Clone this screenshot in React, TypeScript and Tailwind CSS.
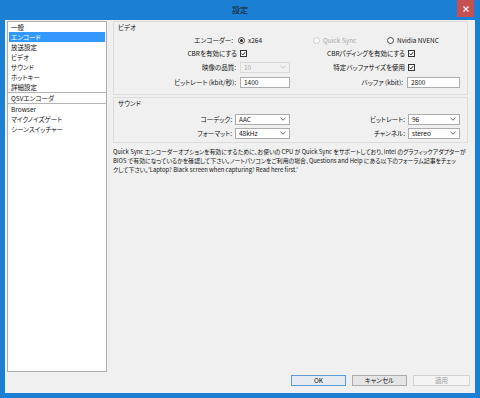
import React from 'react';

const jp = "font-['Noto_Sans_CJK_JP','Noto_Sans',sans-serif] [font-feature-settings:'palt']";

const navItems = [
  'エンコード',
];

function Chevron({ disabled }: { disabled?: boolean }) {
  return (
    <svg width="6" height="4" viewBox="0 0 6 4" className="shrink-0">
      <path d="M0.5 0.8 L3 3.2 L5.5 0.8" fill="none" stroke={disabled ? '#c4c4c4' : '#555'} strokeWidth="0.9" />
    </svg>
  );
}

function Select({ value, w, disabled }: { value: string; w: string; disabled?: boolean }) {
  return (
    <div
      className={`${w} h-[11px] border flex items-center justify-between pl-[3px] pr-[3px] ${
        disabled ? 'bg-[#f0f0f0] border-[#d9d9d9] text-[#a8a8a8]' : 'bg-white border-[#acacac] text-[#111]'
      }`}
    >
      <span>{value}</span>
      <Chevron disabled={disabled} />
    </div>
  );
}

function Input({ value, w }: { value: string; w: string }) {
  return (
    <div className={`${w} h-[11px] border border-[#abadb3] bg-white flex items-center pl-[3px] text-[#111]`}>
      {value}
    </div>
  );
}

function Check() {
  return (
    <span className="w-[7px] h-[7px] border border-[#333] bg-white flex items-center justify-center">
      <svg width="5" height="5" viewBox="0 0 5 5">
        <path d="M0.6 2.6 L1.9 3.9 L4.4 0.9" fill="none" stroke="#111" strokeWidth="0.9" />
      </svg>
    </span>
  );
}

function Radio({ label, checked, disabled }: { label: string; checked?: boolean; disabled?: boolean }) {
  return (
    <span className="flex items-center gap-[3px]">
      <span
        className={`w-[7px] h-[7px] rounded-full border bg-white flex items-center justify-center ${
          disabled ? 'border-[#cccccc] bg-[#f4f4f4]' : 'border-[#444]'
        }`}
      >
        {checked && <span className="w-[3px] h-[3px] rounded-full bg-[#222]" />}
      </span>
      <span className={disabled ? 'text-[#a6a6a6]' : 'text-[#111]'}>{label}</span>
    </span>
  );
}

function Button({ label, w, primary, disabled }: { label: string; w: string; primary?: boolean; disabled?: boolean }) {
  return (
    <div
      className={`${w} h-[11px] border flex items-center justify-center ${
        disabled
          ? 'border-[#d2d2d2] bg-[#f4f4f4] text-[#a0a0a0]'
          : primary
          ? 'border-[#5b9bd6] bg-[#e5ebf1] text-[#111]'
          : 'border-[#acacac] bg-[#e5e5e5] text-[#111]'
      }`}
    >
      {label}
    </div>
  );
}

function SideList() {
  const top = ['一般', 'エンコード', '放送設定', 'ビデオ', 'サウンド', 'ホットキー', '詳細設定'];
  const bottom = ['Browser', 'マイクノイズゲート', 'シーンスイッチャー'];
  return (
    <div className="w-[100px] h-[351px] border border-[#adadad] bg-white px-[1px]">
      {top.map((t) => (
        <div
          key={t}
          className={`h-[10px] flex items-center pl-[2px] ${
            t === navItems[0] ? 'bg-[#3399ff] text-white' : 'text-[#111]'
          }`}
        >
          {t}
        </div>
      ))}
      <div className="h-px bg-[#b4b4b4] -mx-[1px]" />
      <div className="h-[10px] flex items-center pl-[2px] text-[#111]">QSVエンコーダ</div>
      <div className="h-px bg-[#b4b4b4] -mx-[1px]" />
      {bottom.map((t) => (
        <div key={t} className="h-[10px] flex items-center pl-[2px] text-[#111]">
          {t}
        </div>
      ))}
    </div>
  );
}

function VideoGroup() {
  return (
    <div className="h-[74px] border border-[#dcdcdc] flex flex-col">
      <div className="h-[10px] flex items-center pl-[4px] text-[#111]">ビデオ</div>
      <div className="mt-[2px] h-[12px] flex items-center">
        <div className="w-[124px] text-right pr-[5px]">エンコーダー:</div>
        <div className="w-[75px]">
          <Radio label="x264" checked />
        </div>
        <div className="w-[74px]">
          <Radio label="Quick Sync" disabled />
        </div>
        <Radio label="Nvidia NVENC" />
      </div>
      <div className="h-[14px] flex items-center">
        <div className="w-[126px] text-right pr-[3px]">CBRを有効にする</div>
        <div className="w-[50px]">
          <Check />
        </div>
        <div className="w-[118px] text-right pr-[3px]">CBRパディングを有効にする</div>
        <Check />
      </div>
      <div className="h-[14px] flex items-center">
        <div className="w-[126px] text-right pr-[4px]">映像の品質:</div>
        <Select value="10" w="w-[50px]" disabled />
        <div className="w-[118px] text-right pr-[3px]">特定バッファサイズを使用</div>
        <Check />
      </div>
      <div className="mt-[2px] h-[13px] flex items-center">
        <div className="w-[126px] text-right pr-[4px]">ビットレート (kbit/秒):</div>
        <Input value="1400" w="w-[50px]" />
        <div className="w-[117px] text-right pr-[4px]">バッファ (kbit):</div>
        <Input value="2800" w="w-[53px]" />
      </div>
    </div>
  );
}

function SoundGroup() {
  return (
    <div className="mt-[2px] h-[46px] border border-[#dcdcdc] flex flex-col">
      <div className="h-[10px] flex items-center pl-[4px] text-[#111]">サウンド</div>
      <div className="mt-[4px] h-[14px] flex items-center">
        <div className="w-[121px] text-right pr-[3px]">コーデック:</div>
        <Select value="AAC" w="w-[55px]" />
        <div className="w-[118px] text-right pr-[3px]">ビットレート:</div>
        <Select value="96" w="w-[52px]" />
      </div>
      <div className="h-[14px] flex items-center">
        <div className="w-[121px] text-right pr-[3px]">フォーマット:</div>
        <Select value="48kHz" w="w-[55px]" />
        <div className="w-[118px] text-right pr-[3px]">チャンネル:</div>
        <Select value="stereo" w="w-[52px]" />
      </div>
    </div>
  );
}

export default function App() {
  return (
    <div className={`w-[480px] h-[398px] bg-[#1b7fd3] flex flex-col text-[6.5px] leading-none text-[#111] ${jp}`}>
      <div className="h-[20px] relative flex items-center justify-center">
        <span className="text-[8px] text-[#1a1a1a]">設定</span>
        <div className="absolute right-[6px] top-0 w-[17px] h-[17px] bg-[#c75050] flex items-center justify-center">
          <svg width="6" height="6" viewBox="0 0 6 6">
            <path d="M0.5 0.5 L5.5 5.5 M5.5 0.5 L0.5 5.5" stroke="#fff" strokeWidth="1.1" />
          </svg>
        </div>
      </div>
      <div className="flex-1 mx-[5px] mb-[5px] bg-[#f0f0f0] flex flex-col">
        <div className="h-[352px] flex pt-[1px] pl-[2px]">
          <SideList />
          <div className="ml-[6px] w-[355px] flex flex-col">
            <VideoGroup />
            <SoundGroup />
            <div className="mt-[4px] text-[5.9px] leading-[9px] whitespace-nowrap text-[#111]">
              <div>Quick Sync エンコーダーオプションを有効にするために、お使いの CPU が Quick Sync をサポートしており、Intel のグラフィックアダプターが</div>
              <div>BIOS で有効になっているかを確認して下さい。ノートパソコンをご利用の場合、Questions and Help にある以下のフォーラム記事をチェッ</div>
              <div>クして下さい。'Laptop? Black screen when capturing? Read here first.'</div>
            </div>
          </div>
        </div>
        <div className="mt-[3px] flex justify-end gap-[6px] pr-[5px]">
          <Button label="OK" w="w-[55px]" primary />
          <Button label="キャンセル" w="w-[55px]" />
          <Button label="適用" w="w-[57px]" disabled />
        </div>
      </div>
    </div>
  );
}
